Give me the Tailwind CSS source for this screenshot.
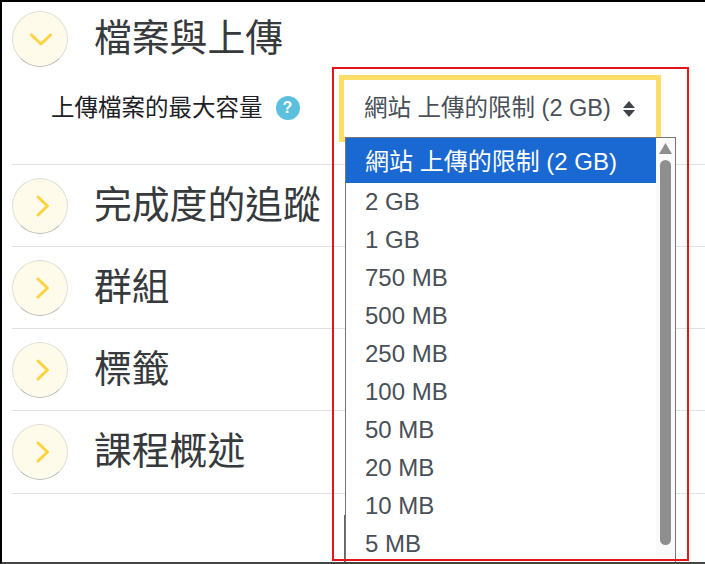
<!DOCTYPE html>
<html lang="zh-Hant">

<head>
    <meta charset="UTF-8">
    <title>檔案與上傳</title>
    <script src="https://cdn.jsdelivr.net/npm/@tailwindcss/browser@4"></script>
</head>

<body class="bg-white overflow-hidden font-['Liberation_Sans','Noto_Sans_CJK_TC',sans-serif]">
    <div class="relative w-[705px] h-[564px] overflow-hidden border-t-2 border-l-2 border-b-2 border-t-black border-l-black border-b-[#444] pl-[10px] pt-[9px]">

        <!-- Section: open -->
        <section class="h-[154px] border-b border-[#dee2e6]">
            <div class="flex items-center">
                <div class="w-14 h-14 rounded-full bg-[#fffbeb] border border-[#e2e0d6] border-b-[#bbb] flex items-center justify-center">
                    <svg class="w-6 h-6" viewBox="0 0 24 24" fill="none" stroke="#fdd33f" stroke-width="3" stroke-linecap="round" stroke-linejoin="round"><path d="M3.5 8l9.5 9 9.5-9" /></svg>
                </div>
                <h3 class="ml-[26px] mb-[2px] text-[37.8px] leading-[50px] text-[#373a3c]">檔案與上傳</h3>
            </div>
            <div class="flex items-center mt-[25px] pl-[39px]">
                <span class="text-[23.5px] leading-8 text-[#1d2125]">上傳檔案的最大容量</span>
                <span class="ml-[13px] w-6 h-6 rounded-full bg-[#5bc0de] text-white text-[16px] font-bold flex items-center justify-center">?</span>
            </div>
        </section>

        <!-- Sections: closed -->
        <section class="h-[82px] border-b border-[#dee2e6] flex items-center">
            <div class="w-14 h-14 rounded-full bg-[#fffbeb] border border-[#e2e0d6] border-b-[#bbb] flex items-center justify-center">
                <svg class="w-6 h-6" viewBox="0 0 24 24" fill="none" stroke="#fdd33f" stroke-width="3" stroke-linecap="round" stroke-linejoin="round"><path d="M10 3l9.5 9-9.5 9" /></svg>
            </div>
            <h3 class="ml-[26px] mb-[2px] text-[37.8px] leading-[50px] text-[#373a3c]">完成度的追蹤</h3>
        </section>
        <section class="h-[82px] border-b border-[#dee2e6] flex items-center">
            <div class="w-14 h-14 rounded-full bg-[#fffbeb] border border-[#e2e0d6] border-b-[#bbb] flex items-center justify-center">
                <svg class="w-6 h-6" viewBox="0 0 24 24" fill="none" stroke="#fdd33f" stroke-width="3" stroke-linecap="round" stroke-linejoin="round"><path d="M10 3l9.5 9-9.5 9" /></svg>
            </div>
            <h3 class="ml-[26px] mb-[2px] text-[37.8px] leading-[50px] text-[#373a3c]">群組</h3>
        </section>
        <section class="h-[82px] border-b border-[#dee2e6] flex items-center">
            <div class="w-14 h-14 rounded-full bg-[#fffbeb] border border-[#e2e0d6] border-b-[#bbb] flex items-center justify-center">
                <svg class="w-6 h-6" viewBox="0 0 24 24" fill="none" stroke="#fdd33f" stroke-width="3" stroke-linecap="round" stroke-linejoin="round"><path d="M10 3l9.5 9-9.5 9" /></svg>
            </div>
            <h3 class="ml-[26px] mb-[2px] text-[37.8px] leading-[50px] text-[#373a3c]">標籤</h3>
        </section>
        <section class="h-[83px] border-b border-[#dee2e6] flex items-center">
            <div class="w-14 h-14 rounded-full bg-[#fffbeb] border border-[#e2e0d6] border-b-[#bbb] flex items-center justify-center">
                <svg class="w-6 h-6" viewBox="0 0 24 24" fill="none" stroke="#fdd33f" stroke-width="3" stroke-linecap="round" stroke-linejoin="round"><path d="M10 3l9.5 9-9.5 9" /></svg>
            </div>
            <h3 class="ml-[26px] mb-[2px] text-[37.8px] leading-[50px] text-[#373a3c]">課程概述</h3>
        </section>

        <!-- Select, focused -->
        <div class="absolute left-[337px] top-[73px] w-[322px] h-[67px] border-[5px] border-[#ffdd66] bg-white flex items-center pl-[20px] text-[23.5px] text-[#495057]">
            <span>網站 上傳的限制 (2 GB)</span>
            <svg class="ml-[11px] w-[14px] h-[18px]" viewBox="0 0 14 18" fill="#3f444a"><path d="M7 1l6 7H1zM7 17l6-7H1z" /></svg>
        </div>

        <!-- Edge of the field behind the list -->
        <div class="absolute left-[342px] top-[513px] w-px h-[60px] bg-[#666]"></div>

        <!-- Open option list -->
        <div class="absolute left-[343px] top-[135px] w-[331px] h-[440px] bg-white border border-[#767676] flex text-[24px] text-[#495057]">
            <ul class="w-[310px]">
                <li class="h-[45px] pl-[19px] pt-[3px] flex items-center bg-[#1a68d1] text-white">網站 上傳的限制 (2 GB)</li>
                <li class="h-[38px] pl-[19px] flex items-center">2 GB</li>
                <li class="h-[38px] pl-[19px] flex items-center">1 GB</li>
                <li class="h-[38px] pl-[19px] flex items-center">750 MB</li>
                <li class="h-[38px] pl-[19px] flex items-center">500 MB</li>
                <li class="h-[38px] pl-[19px] flex items-center">250 MB</li>
                <li class="h-[38px] pl-[19px] flex items-center">100 MB</li>
                <li class="h-[38px] pl-[19px] flex items-center">50 MB</li>
                <li class="h-[38px] pl-[19px] flex items-center">20 MB</li>
                <li class="h-[38px] pl-[19px] flex items-center">10 MB</li>
                <li class="h-[38px] pl-[19px] flex items-center">5 MB</li>
            </ul>
            <div class="w-[19px] bg-[#fafafa] flex flex-col items-center pt-[5px]">
                <svg class="w-[13px] h-[11px]" viewBox="0 0 13 11" fill="#8e8e8e"><path d="M6.5 0l6.5 11H0z" /></svg>
                <div class="w-[11px] h-[385px] mt-[6px] rounded-full bg-[#8e8e8e]"></div>
            </div>
        </div>

        <!-- Annotation frame -->
        <div class="absolute left-[330px] top-[65px] w-[357px] h-[494px] border-2 border-[#e8141c]"></div>
    </div>
</body>

</html>
